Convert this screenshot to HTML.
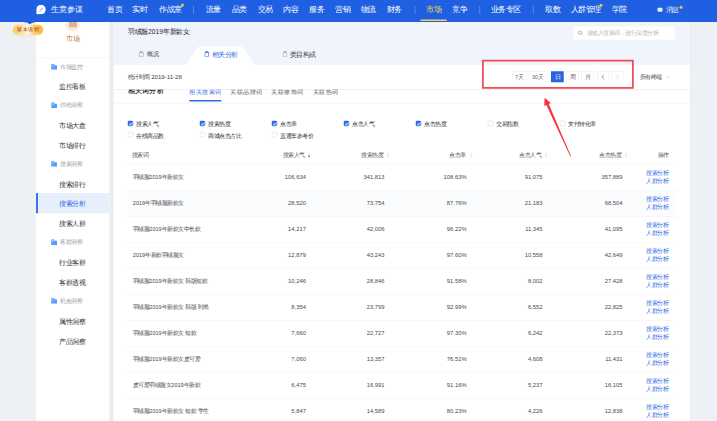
<!DOCTYPE html>
<html><head><meta charset="utf-8">
<style>
*{margin:0;padding:0;box-sizing:border-box}
html,body{width:2868px;height:1684px;overflow:hidden;background:#edf0f5;font-family:"Liberation Sans",sans-serif;color:#333}
.a{position:absolute;white-space:nowrap;line-height:1}
#hdr div,#side div,#main div{white-space:nowrap}
.z{z-index:5}
#hdr{position:absolute;left:0;top:0;width:2868px;height:88px;background:#1f5fe2}
.nav{position:absolute;top:22px;font-size:30px;color:#fff;line-height:1}
.sep{position:absolute;top:24px;width:4px;height:32px;background:rgba(255,255,255,.25)}
.dot{position:absolute;width:12px;height:12px;border-radius:50%;background:#f7c836}
#side{position:absolute;left:144px;top:88px;width:294px;height:1596px;background:#fff;overflow:hidden}
#gap{position:absolute;left:438px;top:88px;width:16.4px;height:1596px;background:linear-gradient(90deg,#eceef2,#e6e9ee)}
#rgap{position:absolute;left:2758.4px;top:88px;width:6.4px;height:1596px;background:#e5e7ec}
#main{position:absolute;left:454.4px;top:88px;width:2306.8px;height:1596px;background:#fff;overflow:hidden}
#mtop{position:absolute;left:0;top:0;width:100%;height:171.2px;background:#f0f4fc}
.grp{position:absolute;left:96px;font-size:22.4px;color:#9c9c9c;line-height:1}
.gi{position:absolute;left:-36.4px;top:-1.2px;width:24.8px;height:24.4px}
.itm{position:absolute;left:92px;font-size:26px;color:#333;line-height:1}
.cb{position:absolute;width:20.4px;height:20.4px;border:2.4px solid #d9d9d9;border-radius:4px;background:#fff}
.cb.on{background:#2a6ae8;border-color:#2a6ae8}
.cb.on::after{content:"";position:absolute;left:5.4px;top:2.2px;width:6px;height:10.4px;border-right:3px solid #fff;border-bottom:3px solid #fff;transform:rotate(45deg)}
.cbl{position:absolute;font-size:22px;color:#333;line-height:1}
.th{position:absolute;font-size:22.4px;color:#555;line-height:1;top:608.8px}
.row{position:absolute;left:56px;width:2196px;height:104px;border-top:2.8px solid #f0f0f0}
.cell{position:absolute;font-size:23.4px;color:#4a4a4a;line-height:1;top:40px}
.num{text-align:right}
.lnk{position:absolute;font-size:22.4px;color:#2f6be6;line-height:1;text-align:right}
.srt{position:absolute;top:614px;width:8px;height:16px}
html,body{width:717px!important;height:421px!important;overflow:hidden}
#root{position:absolute;left:0;top:0;width:2868px;height:1684px;transform:scale(0.25);transform-origin:0 0;overflow:hidden}
</style></head><body><div id="root">

<div id="hdr">
  <svg class="a" style="left:144.8px;top:19.2px" width="38.4" height="38.4" viewBox="0 0 20 20"><path d="M0 20 V10 A10 10 0 1 1 10 20 Z" fill="#fff"/><path d="M7.2 13 L13.2 7" stroke="#3a72e6" stroke-width="1.7" stroke-linecap="round"/></svg>
  <div class="a" style="left:204px;top:21.2px;font-size:32px;color:#fff;font-weight:normal">生意参谋</div>
  <div class="nav" style="left:378.6px;width:160px;text-align:center">首页</div>
  <div class="nav" style="left:479.6px;width:160px;text-align:center">实时</div>
  <div class="nav" style="left:602px;width:160px;text-align:center">作战室</div>
  <div class="dot" style="left:724px;top:14px"></div>
  <div class="sep" style="left:772px"></div>
  <div class="nav" style="left:772px;width:160px;text-align:center">流量</div>
  <div class="nav" style="left:876.4px;width:160px;text-align:center">品类</div>
  <div class="nav" style="left:980.4px;width:160px;text-align:center">交易</div>
  <div class="nav" style="left:1083.2px;width:160px;text-align:center">内容</div>
  <div class="nav" style="left:1186.6px;width:160px;text-align:center">服务</div>
  <div class="nav" style="left:1290.4px;width:160px;text-align:center">营销</div>
  <div class="nav" style="left:1393px;width:160px;text-align:center">物流</div>
  <div class="nav" style="left:1496.6px;width:160px;text-align:center">财务</div>
  <div class="sep" style="left:1658px"></div>
  <div class="nav" style="left:1655.8px;width:160px;text-align:center;color:#f7d14a">市场</div>
  <div class="a" style="left:1682.4px;top:78px;width:104.8px;height:6px;background:#f7d14a"></div>
  <div class="nav" style="left:1759.2px;width:160px;text-align:center">竞争</div>
  <div class="sep" style="left:1916.8px"></div>
  <div class="nav" style="left:1943.2px;width:160px;text-align:center">业务专区</div>
  <div class="sep" style="left:2130.8px"></div>
  <div class="nav" style="left:2131.8px;width:160px;text-align:center">取数</div>
  <div class="nav" style="left:2263.2px;width:160px;text-align:center">人群管理</div>
  <div class="dot" style="left:2398px;top:15.2px"></div>
  <div class="nav" style="left:2396.6px;width:160px;text-align:center">学院</div>
  <div class="a" style="left:2630px;top:31.2px;width:20px;height:16px;background:#fff;border-radius:4px;opacity:.9"></div>
  <div class="a" style="left:2662px;top:26.4px;font-size:26px;color:#fff">消息</div>
  <div class="dot" style="left:2718px;top:23.2px"></div>
</div>

<!-- badge -->
<svg class="a z" style="left:95.2px;top:85.6px" width="48" height="12" viewBox="0 0 120 30"><path d="M0 0 H120 Q112 14 100 10 Q90 8 82 14 Q60 34 40 14 Q30 6 20 10 Q8 14 0 0Z" fill="#1a58de"/></svg>
<div class="a z" style="left:52px;top:98.8px;width:120px;height:40px;border-radius:20px;background:linear-gradient(90deg,#ffca55 0%,#ffdc8f 25%,#fff7e6 50%,#ffd070 68%,#ffb42c 100%);box-shadow:0 2.4px 6.4px rgba(120,90,40,.12)"></div>
<div class="a z" style="left:68px;top:106.4px;font-size:21.6px;color:#922f1a">版本说明</div>

<div id="side">
  <div class="a" style="left:119.2px;top:-17.6px;width:56px;height:56px;border-radius:50%;background:#fcecdc"></div>
  <svg class="a" style="left:130.8px;top:-4px" width="33.6" height="26.4" viewBox="0 0 84 66"><rect x="4" y="58" width="76" height="8" fill="#e39a4e"/><rect x="8" y="4" width="10" height="52" fill="#c9a9b8" stroke="#e0913f" stroke-width="4"/><rect x="28" y="14" width="10" height="42" fill="#c9a9b8" stroke="#e0913f" stroke-width="4"/><rect x="48" y="8" width="10" height="48" fill="#c9a9b8" stroke="#e0913f" stroke-width="4"/><rect x="66" y="18" width="10" height="38" fill="#c9a9b8" stroke="#e0913f" stroke-width="4"/></svg>
  <div class="a" style="left:120px;top:51.2px;font-size:28.8px;color:#c27d40">市场</div>
  <div class="a" style="left:0;top:141.6px;width:294px;height:3.2px;background:#f0f1f3"></div>

  <div class="grp" style="top:168px"><svg class="gi" viewBox="0 0 62 62"><path d="M2 4 Q2 0 6 0 H31 Q34 0 34 4 V16 H58 Q62 16 62 20 V62 H2 Z" fill="#55a0f7"/><rect x="9" y="8" width="16" height="20" fill="#9fcafb"/></svg>市场监控</div>
  <div class="itm" style="top:246.8px">监控看板</div>
  <div class="grp" style="top:322px"><svg class="gi" viewBox="0 0 62 62"><path d="M2 4 Q2 0 6 0 H31 Q34 0 34 4 V16 H58 Q62 16 62 20 V62 H2 Z" fill="#55a0f7"/><rect x="9" y="8" width="16" height="20" fill="#9fcafb"/></svg>供给洞察</div>
  <div class="itm" style="top:402px">市场大盘</div>
  <div class="itm" style="top:480px">市场排行</div>
  <div class="grp" style="top:556px"><svg class="gi" viewBox="0 0 62 62"><path d="M2 4 Q2 0 6 0 H31 Q34 0 34 4 V16 H58 Q62 16 62 20 V62 H2 Z" fill="#55a0f7"/><rect x="9" y="8" width="16" height="20" fill="#9fcafb"/></svg>搜索洞察</div>
  <div class="itm" style="top:636px">搜索排行</div>
  <div class="a" style="left:0;top:684.4px;width:294px;height:80.4px;background:#e7effd"></div>
  <div class="a" style="left:0;top:684.4px;width:8px;height:80.4px;background:#3a74e8"></div>
  <div class="itm" style="top:714px;color:#2f66e0">搜索分析</div>
  <div class="itm" style="top:794.4px">搜索人群</div>
  <div class="grp" style="top:870px"><svg class="gi" viewBox="0 0 62 62"><path d="M2 4 Q2 0 6 0 H31 Q34 0 34 4 V16 H58 Q62 16 62 20 V62 H2 Z" fill="#55a0f7"/><rect x="9" y="8" width="16" height="20" fill="#9fcafb"/></svg>客群洞察</div>
  <div class="itm" style="top:950px">行业客群</div>
  <div class="itm" style="top:1030px">客群透视</div>
  <div class="grp" style="top:1104px"><svg class="gi" viewBox="0 0 62 62"><path d="M2 4 Q2 0 6 0 H31 Q34 0 34 4 V16 H58 Q62 16 62 20 V62 H2 Z" fill="#55a0f7"/><rect x="9" y="8" width="16" height="20" fill="#9fcafb"/></svg>机会洞察</div>
  <div class="itm" style="top:1184px">属性洞察</div>
  <div class="itm" style="top:1264px">产品洞察</div>
</div>
<div id="gap"></div>
<div id="rgap"></div>

<div id="main">
  <!-- scrolled content -->
  <div class="a" style="left:56px;top:259.6px;font-size:29.2px;font-weight:bold;color:#2a2a2a">相关词分析</div>
  <div class="a" style="left:302.4px;top:266.8px;font-size:25.6px;color:#2f6be6">相关搜索词</div>
  <div class="a" style="left:302.4px;top:312px;width:128px;height:5.6px;background:#2f6be6"></div>
  <div class="a" style="left:467.2px;top:266.8px;font-size:25.6px;color:#555">关联品牌词</div>
  <div class="a" style="left:631.6px;top:266.8px;font-size:25.6px;color:#555">关联修饰词</div>
  <div class="a" style="left:797.6px;top:266.8px;font-size:25.6px;color:#555">关联热词</div>
  <div class="a" style="left:0;top:322.8px;width:2306.8px;height:3.6px;background:#efefef"></div>

  <!-- checkboxes -->
  <div class="cb on" style="left:56.8px;top:395.2px"></div><div class="cbl" style="left:90px;top:396.8px">搜索人气</div>
  <div class="cb on" style="left:344.8px;top:395.2px"></div><div class="cbl" style="left:378px;top:396.8px">搜索热度</div>
  <div class="cb on" style="left:632.8px;top:395.2px"></div><div class="cbl" style="left:666px;top:396.8px">点击率</div>
  <div class="cb on" style="left:920.8px;top:395.2px"></div><div class="cbl" style="left:954px;top:396.8px">点击人气</div>
  <div class="cb on" style="left:1208.8px;top:395.2px"></div><div class="cbl" style="left:1242px;top:396.8px">点击热度</div>
  <div class="cb" style="left:1496.8px;top:395.2px"></div><div class="cbl" style="left:1530px;top:396.8px">交易指数</div>
  <div class="cb" style="left:1784.8px;top:395.2px"></div><div class="cbl" style="left:1818px;top:396.8px">支付转化率</div>
  <div class="cb" style="left:56.8px;top:440.8px"></div><div class="cbl" style="left:90px;top:444px">在线商品数</div>
  <div class="cb" style="left:344.8px;top:440.8px"></div><div class="cbl" style="left:378px;top:444px">商城点击占比</div>
  <div class="cb" style="left:632.8px;top:440.8px"></div><div class="cbl" style="left:666px;top:444px">直通车参考价</div>

  <!-- table header -->
  <div class="th" style="left:73.6px;top:521.6px">搜索词</div>
  <div class="th" style="right:1543.2px;top:521.6px">搜索人气</div>
  <div class="th" style="right:1228px;top:521.6px">搜索热度</div>
  <div class="th" style="right:899.2px;top:521.6px">点击率</div>
  <div class="th" style="right:597.2px;top:521.6px">点击人气</div>
  <div class="th" style="right:277.2px;top:521.6px">点击热度</div>
  <div class="th" style="right:86px;top:521.6px">操作</div>
  <svg class="a" style="left:776.8px;top:520.8px" width="10.4" height="21.6" viewBox="0 0 26 54"><path d="M13 0 L26 20 L0 20Z" fill="#dfe6f2"/><path d="M13 54 L26 32 L0 32Z" fill="#3c6fe8"/></svg>
  <svg class="a" style="left:1092.8px;top:520.8px" width="10.4" height="21.6" viewBox="0 0 26 54"><path d="M13 0 L26 20 L0 20Z" fill="#dfe6f2"/><path d="M13 54 L26 32 L0 32Z" fill="#dfe6f2"/></svg>
  <svg class="a" style="left:1424.8px;top:520.8px" width="10.4" height="21.6" viewBox="0 0 26 54"><path d="M13 0 L26 20 L0 20Z" fill="#dfe6f2"/><path d="M13 54 L26 32 L0 32Z" fill="#dfe6f2"/></svg>
  <svg class="a" style="left:1724.8px;top:520.8px" width="10.4" height="21.6" viewBox="0 0 26 54"><path d="M13 0 L26 20 L0 20Z" fill="#dfe6f2"/><path d="M13 54 L26 32 L0 32Z" fill="#dfe6f2"/></svg>
  <svg class="a" style="left:2044.8px;top:520.8px" width="10.4" height="21.6" viewBox="0 0 26 54"><path d="M13 0 L26 20 L0 20Z" fill="#dfe6f2"/><path d="M13 54 L26 32 L0 32Z" fill="#dfe6f2"/></svg>

  <!--ROWS-->
<div class="row" style="top:570px;"></div>
<div class="cell" style="left:76.8px;top:608.8px;font-size:22.2px">羽绒服2019年新款女</div>
<div class="cell" style="right:1537.2px;top:608.8px">106,634</div>
<div class="cell" style="right:1222.8px;top:608.8px">341,813</div>
<div class="cell" style="right:894.8px;top:608.8px">108.63%</div>
<div class="cell" style="right:590.8px;top:608.8px">91,075</div>
<div class="cell" style="right:270.8px;top:608.8px">357,889</div>
<div class="lnk" style="right:87.6px;top:593.2px">搜索分析</div>
<div class="lnk" style="right:87.6px;top:624.8px">人群分析</div>
<div class="row" style="top:674px;background:#fbfcfe;"></div>
<div class="cell" style="left:76.8px;top:712.8px;font-size:22.2px">2019年羽绒服新款女</div>
<div class="cell" style="right:1537.2px;top:712.8px">28,520</div>
<div class="cell" style="right:1222.8px;top:712.8px">73,754</div>
<div class="cell" style="right:894.8px;top:712.8px">87.76%</div>
<div class="cell" style="right:590.8px;top:712.8px">21,183</div>
<div class="cell" style="right:270.8px;top:712.8px">68,504</div>
<div class="lnk" style="right:87.6px;top:697.2px">搜索分析</div>
<div class="lnk" style="right:87.6px;top:728.8px">人群分析</div>
<div class="row" style="top:778px;"></div>
<div class="cell" style="left:76.8px;top:816.8px;font-size:22.2px">羽绒服2019年新款女中长款</div>
<div class="cell" style="right:1537.2px;top:816.8px">14,217</div>
<div class="cell" style="right:1222.8px;top:816.8px">42,006</div>
<div class="cell" style="right:894.8px;top:816.8px">96.22%</div>
<div class="cell" style="right:590.8px;top:816.8px">11,345</div>
<div class="cell" style="right:270.8px;top:816.8px">41,095</div>
<div class="lnk" style="right:87.6px;top:801.2px">搜索分析</div>
<div class="lnk" style="right:87.6px;top:832.8px">人群分析</div>
<div class="row" style="top:882px;"></div>
<div class="cell" style="left:76.8px;top:920.8px;font-size:22.2px">2019年新款羽绒服女</div>
<div class="cell" style="right:1537.2px;top:920.8px">12,879</div>
<div class="cell" style="right:1222.8px;top:920.8px">43,243</div>
<div class="cell" style="right:894.8px;top:920.8px">97.60%</div>
<div class="cell" style="right:590.8px;top:920.8px">10,558</div>
<div class="cell" style="right:270.8px;top:920.8px">42,649</div>
<div class="lnk" style="right:87.6px;top:905.2px">搜索分析</div>
<div class="lnk" style="right:87.6px;top:936.8px">人群分析</div>
<div class="row" style="top:986px;"></div>
<div class="cell" style="left:76.8px;top:1024.4px;font-size:22.2px">羽绒服2019年新款女 韩版短款</div>
<div class="cell" style="right:1537.2px;top:1024.4px">10,246</div>
<div class="cell" style="right:1222.8px;top:1024.4px">28,846</div>
<div class="cell" style="right:894.8px;top:1024.4px">91.58%</div>
<div class="cell" style="right:590.8px;top:1024.4px">8,002</div>
<div class="cell" style="right:270.8px;top:1024.4px">27,428</div>
<div class="lnk" style="right:87.6px;top:1009.2px">搜索分析</div>
<div class="lnk" style="right:87.6px;top:1040.8px">人群分析</div>
<div class="row" style="top:1090px;"></div>
<div class="cell" style="left:76.8px;top:1128.4px;font-size:22.2px">羽绒服2019年新款女 韩版 时尚</div>
<div class="cell" style="right:1537.2px;top:1128.4px">8,354</div>
<div class="cell" style="right:1222.8px;top:1128.4px">23,799</div>
<div class="cell" style="right:894.8px;top:1128.4px">92.99%</div>
<div class="cell" style="right:590.8px;top:1128.4px">6,552</div>
<div class="cell" style="right:270.8px;top:1128.4px">22,825</div>
<div class="lnk" style="right:87.6px;top:1113.2px">搜索分析</div>
<div class="lnk" style="right:87.6px;top:1144.8px">人群分析</div>
<div class="row" style="top:1194px;"></div>
<div class="cell" style="left:76.8px;top:1232.4px;font-size:22.2px">羽绒服2019年新款女 短款</div>
<div class="cell" style="right:1537.2px;top:1232.4px">7,660</div>
<div class="cell" style="right:1222.8px;top:1232.4px">22,727</div>
<div class="cell" style="right:894.8px;top:1232.4px">97.30%</div>
<div class="cell" style="right:590.8px;top:1232.4px">6,242</div>
<div class="cell" style="right:270.8px;top:1232.4px">22,373</div>
<div class="lnk" style="right:87.6px;top:1217.2px">搜索分析</div>
<div class="lnk" style="right:87.6px;top:1248.8px">人群分析</div>
<div class="row" style="top:1298px;"></div>
<div class="cell" style="left:76.8px;top:1336.4px;font-size:22.2px">羽绒服2019年新款女皮可爱</div>
<div class="cell" style="right:1537.2px;top:1336.4px">7,060</div>
<div class="cell" style="right:1222.8px;top:1336.4px">13,357</div>
<div class="cell" style="right:894.8px;top:1336.4px">76.51%</div>
<div class="cell" style="right:590.8px;top:1336.4px">4,608</div>
<div class="cell" style="right:270.8px;top:1336.4px">11,431</div>
<div class="lnk" style="right:87.6px;top:1321.2px">搜索分析</div>
<div class="lnk" style="right:87.6px;top:1352.8px">人群分析</div>
<div class="row" style="top:1402px;"></div>
<div class="cell" style="left:76.8px;top:1440.4px;font-size:22.2px">皮可爱羽绒服女2019年新款</div>
<div class="cell" style="right:1537.2px;top:1440.4px">6,475</div>
<div class="cell" style="right:1222.8px;top:1440.4px">16,991</div>
<div class="cell" style="right:894.8px;top:1440.4px">91.16%</div>
<div class="cell" style="right:590.8px;top:1440.4px">5,237</div>
<div class="cell" style="right:270.8px;top:1440.4px">16,105</div>
<div class="lnk" style="right:87.6px;top:1425.2px">搜索分析</div>
<div class="lnk" style="right:87.6px;top:1456.8px">人群分析</div>
<div class="row" style="top:1506px;"></div>
<div class="cell" style="left:76.8px;top:1544.4px;font-size:22.2px">羽绒服2019年新款女 短款 学生</div>
<div class="cell" style="right:1537.2px;top:1544.4px">5,847</div>
<div class="cell" style="right:1222.8px;top:1544.4px">14,589</div>
<div class="cell" style="right:894.8px;top:1544.4px">80.23%</div>
<div class="cell" style="right:590.8px;top:1544.4px">4,226</div>
<div class="cell" style="right:270.8px;top:1544.4px">12,838</div>
<div class="lnk" style="right:87.6px;top:1529.2px">搜索分析</div>
<div class="lnk" style="right:87.6px;top:1560.8px">人群分析</div>
<!--/ROWS-->

  <!-- sticky top -->
  <div class="a" style="left:0;top:0;width:2306.8px;height:269.6px;background:#fff;box-shadow:0 2.8px 4.8px rgba(0,0,0,.11)"></div>
  <div id="mtop"></div>
  <div class="a" style="left:56.8px;top:27.2px;font-size:26.8px;color:#262626">羽绒服2019年新款女</div>
  <svg class="a" style="left:278px;top:95.2px" width="308" height="78" viewBox="-1 0 77 19.5"><path d="M-1 19.5 Q1.5 19.3 3 17.5 L13 2.8 Q14.8 0 17.5 0 L55 0 Q57.7 0 59.5 2.8 L69.5 17.5 Q71 19.3 74 19.5 Z" fill="#fff"/></svg>
  <svg class="a" style="left:100.8px;top:116px" width="20.4" height="23.2" viewBox="0 0 51 58"><path d="M15 2 H36 L47 15 H4 Z" fill="#a5a5a5"/><rect x="6.5" y="17" width="38" height="37.5" stroke="#a5a5a5" stroke-width="6.5" fill="none"/></svg>
  <div class="a" style="left:132px;top:116px;font-size:25.6px;color:#444">概况</div>
  <svg class="a" style="left:362.4px;top:116px" width="20.4" height="23.2" viewBox="0 0 51 58"><path d="M15 2 H36 L47 15 H4 Z" fill="#2f6be6"/><rect x="6.5" y="17" width="38" height="37.5" stroke="#2f6be6" stroke-width="6.5" fill="none"/></svg>
  <div class="a" style="left:393.6px;top:116px;font-size:26px;color:#2f6be6">相关分析</div>
  <svg class="a" style="left:675.2px;top:116px" width="20.4" height="23.2" viewBox="0 0 51 58"><path d="M15 2 H36 L47 15 H4 Z" fill="#a5a5a5"/><rect x="6.5" y="17" width="38" height="37.5" stroke="#a5a5a5" stroke-width="6.5" fill="none"/></svg>
  <div class="a" style="left:704px;top:116px;font-size:26px;color:#444">类目构成</div>
  <!-- search box -->
  <div class="a" style="left:1838.4px;top:17.6px;width:407.2px;height:53.2px;background:#fff;box-shadow:0 0 2px rgba(0,0,0,.05)"></div>
  <svg class="a" style="left:1857.6px;top:34px" width="21.6" height="20.8" viewBox="0 0 54 52"><circle cx="22" cy="22" r="17" stroke="#8a8a8a" stroke-width="6" fill="none"/><path d="M35 35 L48 47" stroke="#8a8a8a" stroke-width="6"/></svg>
  <div class="a" style="left:1892px;top:32.8px;font-size:22px;color:#b8b8b8">请输入搜索词，进行深度分析</div>

  <div class="a" style="left:56px;top:208.8px;font-size:22.4px;color:#444">统计时间 <span style="font-size:24.4px">2019-11-28</span></div>

  <!-- date buttons -->
  <div class="a" style="left:1593.2px;top:196.8px;width:60px;height:44px;border:2.4px solid #ececec;background:#fff"></div>
  <div class="a" style="left:1606px;top:208px;font-size:22px;color:#666">7天</div>
  <div class="a" style="left:1661.6px;top:196.8px;width:76px;height:44px;border:2.4px solid #ececec;background:#fff"></div>
  <div class="a" style="left:1673.6px;top:208px;font-size:22px;color:#666">30天</div>
  <div class="a" style="left:1749.6px;top:196.8px;width:50.8px;height:44px;background:#2a64e0"></div>
  <div class="a" style="left:1764px;top:208px;font-size:22px;color:#fff">日</div>
  <div class="a" style="left:1812px;top:196.8px;width:48.8px;height:44px;border:2.4px solid #ececec;background:#fff"></div>
  <div class="a" style="left:1825.2px;top:208px;font-size:22px;color:#666">周</div>
  <div class="a" style="left:1872px;top:196.8px;width:47.2px;height:44px;border:2.4px solid #ececec;background:#fff"></div>
  <div class="a" style="left:1884.8px;top:208px;font-size:22px;color:#666">月</div>
  <div class="a" style="left:1933.6px;top:196.8px;width:48px;height:44px;border:2.4px solid #ececec;background:#fff"></div>
  <svg class="a" style="left:1949.2px;top:208.8px" width="16" height="22.4" viewBox="0 0 40 56"><path d="M30 4 L10 28 L30 52" stroke="#555" stroke-width="6" fill="none"/></svg>
  <div class="a" style="left:1992px;top:196.8px;width:46.4px;height:44px;border:2.4px solid #ececec;background:#fff"></div>
  <svg class="a" style="left:2007.2px;top:208.8px" width="16" height="22.4" viewBox="0 0 40 56"><path d="M10 4 L30 28 L10 52" stroke="#c4c4c4" stroke-width="6" fill="none"/></svg>
  <div class="a" style="left:2104px;top:208px;font-size:22px;color:#444">所有终端</div>
  <svg class="a" style="left:2210.4px;top:214.4px" width="17.6" height="11.2" viewBox="0 0 44 28"><path d="M3 4 L22 23 L41 4" stroke="#b0b0b0" stroke-width="4.5" fill="none"/></svg>
</div>

<!-- red annotation -->
<div class="a" style="left:1928px;top:239.2px;width:607.2px;height:115.6px;border:7.8px solid #f64a55"></div>
<svg class="a" style="left:0;top:0" width="2868" height="1684" viewBox="0 0 717 421">
  <path d="M544.6 97.8 L544.3 105.9 L546.38 105.0 L570.33 156.56 L571.07 156.24 L548.76 103.94 L550.8 103.0 Z" fill="#fa3240"/>
</svg>

</div></body></html>
